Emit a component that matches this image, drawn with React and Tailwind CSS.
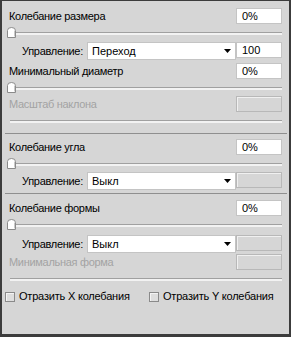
import React from "react";

const font = { fontFamily: '"Liberation Sans", Arial, sans-serif' };

function Input({ value, disabled }) {
  if (disabled) {
    return (
      <div className="w-[46px] h-[16px] border border-[#b8b8b8] bg-[#d6d6d6] shadow-[inset_1px_1px_0_#f0f0f0]" />
    );
  }
  return (
    <div className="w-[46px] h-[16px] border border-[#c4c4c4] bg-white flex items-center pl-[5px] text-[11px] leading-none text-black">
      {value}
    </div>
  );
}

function Thumb() {
  return (
    <svg width="9" height="11" viewBox="0 0 9 11" className="shrink-0">
      <path d="M0.5 10.5 V3.5 Q0.5 0.5 4.5 0.5 Q8.5 0.5 8.5 3.5 V10.5 Z" fill="#ffffff" stroke="#8a8a8a" />
      <path d="M7.5 3.5 V9.5" stroke="#c8c8c8" />
    </svg>
  );
}

function Slider({ disabled }) {
  return (
    <div className="h-[11px] flex items-center pl-[5px] pr-[7px]">
      {disabled ? (
        <div className="flex-1 ml-[3px] h-[3px] border-t border-[#a0a0a0] bg-[#f2f2f2]" />
      ) : (
        <>
          <Thumb />
          <div className="flex-1 h-[3px] border-t border-[#a0a0a0] bg-[#f2f2f2] mt-[1px]" />
        </>
      )}
    </div>
  );
}

function LabelRow({ label, value, disabled }) {
  return (
    <div className="h-[16px] flex items-center justify-between pl-[7px] pr-[7px]">
      <span className={`text-[11px] leading-none tracking-[-0.3px] ${disabled ? "text-[#a3a3a3]" : "text-black"}`}>{label}</span>
      <Input value={value} disabled={disabled} />
    </div>
  );
}

function ControlRow({ value, right, disabledRight }) {
  return (
    <div className="flex items-start pr-[7px]">
      <span className="text-[11px] leading-none tracking-[-0.3px] text-black pl-[20px] w-[85px] pt-[4px]">Управление:</span>
      <div className="w-[149px] h-[18px] border border-[#c4c4c4] bg-white flex items-center justify-between pl-[4px] pr-[4px] text-[11px] leading-none text-black">
        <span>{value}</span>
        <svg width="7" height="4" viewBox="0 0 7 4">
          <path d="M0 0 H7 L3.5 4 Z" fill="#000" />
        </svg>
      </div>
      <div className="ml-auto">
        <Input value={right} disabled={disabledRight} />
      </div>
    </div>
  );
}

function Separator() {
  return <div className="h-px bg-[#8f8f8f] ml-[3px] mr-[2px]" />;
}

function Checkbox({ label }) {
  return (
    <div className="flex items-center">
      <div className="w-[10px] h-[10px] border border-[#8a8a8a] bg-[#dedede] shadow-[inset_1px_1px_0_#f4f4f4]" />
      <span className="ml-[4px] text-[11px] leading-none tracking-[-0.2px] text-black">{label}</span>
    </div>
  );
}

export default function App() {
  return (
    <div
      style={font}
      className="w-[291px] h-[337px] bg-[#d6d6d6] border-t border-l-2 border-r-2 border-b-[3px] border-[#3c3c3c] flex flex-col"
    >
      <div className="mt-[7px]">
        <LabelRow label="Колебание размера" value="0%" />
      </div>
      <div className="mt-[3px]">
        <Slider />
      </div>
      <div className="mt-[4px]">
        <ControlRow value="Переход" right="100" />
      </div>
      <div className="mt-[3px]">
        <LabelRow label="Минимальный диаметр" value="0%" />
      </div>
      <div className="mt-[3px]">
        <Slider />
      </div>
      <div className="mt-[3px]">
        <LabelRow label="Масштаб наклона" disabled />
      </div>
      <div className="mt-[4px]">
        <Slider disabled />
      </div>
      <div className="mt-[6px]">
        <Separator />
      </div>
      <div className="mt-[5px]">
        <LabelRow label="Колебание угла" value="0%" />
      </div>
      <div className="mt-[3px]">
        <Slider />
      </div>
      <div className="mt-[3px]">
        <ControlRow value="Выкл" disabledRight />
      </div>
      <div className="mt-[3px]">
        <Separator />
      </div>
      <div className="mt-[6px]">
        <LabelRow label="Колебание формы" value="0%" />
      </div>
      <div className="mt-[3px]">
        <Slider />
      </div>
      <div className="mt-[5px]">
        <ControlRow value="Выкл" disabledRight />
      </div>
      <div className="mt-[1px]">
        <LabelRow label="Минимальная форма" disabled />
      </div>
      <div className="mt-[4px]">
        <Slider disabled />
      </div>
      <div className="mt-[6px] flex pl-[3px]">
        <div className="w-[144px]">
          <Checkbox label="Отразить X колебания" />
        </div>
        <Checkbox label="Отразить Y колебания" />
      </div>
    </div>
  );
}
